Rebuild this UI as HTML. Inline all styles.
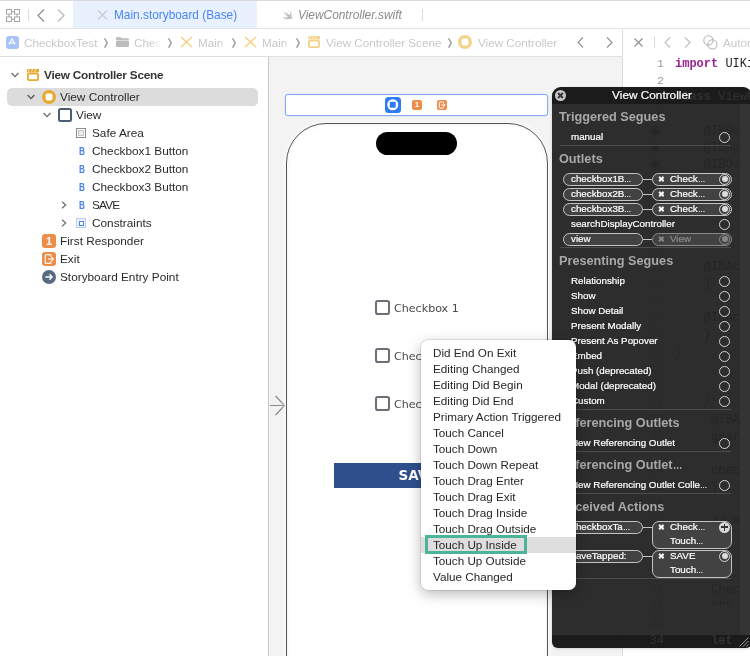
<!DOCTYPE html>
<html><head><meta charset="utf-8"><title>Main.storyboard</title>
<style>
*{box-sizing:border-box;margin:0;padding:0}
html,body{width:750px;height:656px;overflow:hidden;background:#fff}
body{position:relative;font-family:"Liberation Sans",sans-serif;font-size:12px;color:#262626;-webkit-font-smoothing:antialiased}
#root{position:absolute;left:0;top:0;width:750px;height:656px;overflow:hidden;will-change:transform;transform:translateZ(0)}
.abs{position:absolute}
.t{position:absolute;white-space:nowrap;line-height:16px;height:16px}
svg{position:absolute;overflow:visible}
/* top bars */
#tabbar{left:0;top:0;width:750px;height:29px;background:#fff;border-top:1px solid #d9d9d9;border-bottom:1px solid #e4e4e4}
#tab1{left:73px;top:1px;width:184px;height:27px;background:#e9f1fe}
#crumb{left:0;top:29px;width:750px;height:28px;background:#fff;border-bottom:1px solid #e0e0e0}
.bc{color:#c8c8c8;font-size:11.7px}
.sep{color:#8a8a8a;font-size:9px}
/* outline */
#outline{left:0;top:57px;width:268px;height:599px;background:#fff}
#sel{left:7px;top:88px;width:251px;height:18px;background:#dcdcdc;border-radius:5px}
.row{font-size:11.8px;color:#2a2a2a}
.bi{margin-top:.6px;font-size:10px;font-weight:bold;color:#4a80ee;width:8px;margin-left:-.5px;text-align:center;transform:scaleX(.82)}
/* canvas */
#canvas{left:268px;top:57px;width:354px;height:599px;background:#f3f3f3}
#editor{left:622px;top:29px;width:128px;height:627px;background:#fff;border-left:1px solid #dcdcdc}
.mono{font-family:"Liberation Mono",monospace;font-size:12px}
.cb{width:14.500px;height:14.500px;border:2px solid #6e6e78;border-radius:2.800px;background:#fff}
.cbt{margin-top:.8px;font-family:"DejaVu Sans",sans-serif;font-size:11.100px;color:#4a4a4a}
.gl{color:#b8b8b8}
.gc{color:#5a5a5a}
.gh{position:absolute;white-space:nowrap;line-height:16px;color:rgba(255,255,255,.09)}
/* hud */
#hud{left:552px;top:87px;width:200px;height:561px;border-radius:9px 9px 6px 6px;background:rgba(34,34,34,.95);overflow:hidden;box-shadow:0 1px 3px rgba(0,0,0,.15)}
#hudtitle{left:0;top:0;width:210px;height:17px;background:rgba(0,0,0,.4)}
#hudfoot{left:0;top:548px;width:210px;height:13px;background:rgba(0,0,0,.4)}
.hh{position:absolute;left:7.500px;font-weight:bold;font-size:12.700px;color:#a8a8a8;white-space:nowrap;line-height:16px}
.el{display:inline-block;transform:scaleX(.74);transform-origin:0 50%;margin-right:-2.600px}
.hr{position:absolute;left:19px;font-size:9.800px;-webkit-text-stroke:.2px;color:#fff;white-space:nowrap;line-height:14px}
.hl{position:absolute;left:8px;width:171px;height:1px;background:#4c4c4c}
.ring{position:absolute;left:166.900px;width:11.400px;height:11.400px;border:1.500px solid #d2d2d2;border-radius:50%}
.pill{position:absolute;height:13px;border:1px solid #c4c4c4;border-radius:7px;background:rgba(255,255,255,.1)}
/* popup */
#menu{left:421px;top:340px;width:155px;height:250px;background:#fff;border-radius:7px;box-shadow:0 0 0 .5px rgba(0,0,0,.18),0 4px 14px rgba(0,0,0,.28)}
.mi{position:absolute;left:12px;font-size:11.700px;color:#262626;white-space:nowrap;line-height:16px}
</style></head><body><div id="root">

<!-- ===== tab bar ===== -->
<div id="tabbar" class="abs"></div>
<div id="tab1" class="abs"></div>
<svg style="left:6px;top:9px" width="14" height="13" viewBox="0 0 14 13" fill="none" stroke="#a6a6a6" stroke-width="1"><rect x=".5" y=".5" width="5" height="4.6"/><rect x="8.5" y=".5" width="5" height="4.6"/><rect x=".5" y="7.9" width="5" height="4.6"/><rect x="8.5" y="7.9" width="5" height="4.6"/><path d="M5.5 2.8h3M5.5 10.2h3M3 5.1v2.8M11 5.1v2.8"/></svg>
<div class="abs" style="left:28px;top:9px;width:1px;height:12px;background:#dcdcdc"></div>
<svg style="left:37px;top:9px" width="8" height="13" viewBox="0 0 8 13" fill="none" stroke="#8e8e8e" stroke-width="1.2"><path d="M7 .5L1 6.5l6 6"/></svg>
<svg style="left:57px;top:9px" width="8" height="13" viewBox="0 0 8 13" fill="none" stroke="#b9b9b9" stroke-width="1.2"><path d="M1 .5l6 6-6 6"/></svg>
<svg style="left:97px;top:10px" width="11" height="10" viewBox="0 0 11 10" fill="none" stroke="#c9ccd2" stroke-width="1.2"><path d="M1 .5l9 9M10 .5l-9 9"/></svg>
<div class="t" style="left:114px;top:7px;font-size:11.85px;color:#4a86f6">Main.storyboard (Base)</div>
<svg style="left:281.500px;top:10px" width="11" height="10" viewBox="0 0 11 10"><path d="M7 .2C9.200 1.800 10 4.600 9.300 6.600c.9 1.100 1.300 2.300 1.100 3-.6-.9-1.400-1.300-2.200-1C6.600 9.600 3.200 9.800.2 6.400c2.200 1.200 4.400 1.400 5.800.5C4 5.400 2.300 3.300 1 1.500c1.800 1.500 3.600 2.800 5.200 3.800C5 4 3.600 2.300 2.800 1c1.800 1.700 3.800 3.400 5.300 4.300C8.500 3.800 8.200 1.900 7 .2z" fill="#bcbcbc"/></svg>
<div class="t" style="left:298px;top:7px;font-size:11.9px;font-style:italic;color:#8a8a8a">ViewController.swift</div>
<div class="abs" style="left:422px;top:9px;width:1px;height:12px;background:#dcdcdc"></div>

<!-- ===== breadcrumb ===== -->
<div id="crumb" class="abs"></div>
<div class="abs" style="left:5.500px;top:35.500px;width:13px;height:13px;border-radius:3px;background:#a6c3fb"></div>
<svg style="left:6px;top:36px" width="12" height="12" viewBox="0 0 12 12" fill="none" stroke="#fff" stroke-width="1.100"><path d="M6 2.5L3.3 8.5M6 2.5l2.7 6M2.5 7h7"/></svg>
<div class="t bc" style="left:24px;top:35px">CheckboxTest</div>
<svg style="left:103.5px;top:38px" width="4" height="10" viewBox="0 0 4 10" fill="none" stroke="#9a9a9a" stroke-width="1.4"><path d="M.6 .3L3.200 5 .6 9.700"/></svg>
<svg style="left:116px;top:37px" width="13" height="10" viewBox="0 0 13 10"><path d="M0 1.5C0 .7.6 0 1.4 0h3l1.2 1.3h6c.8 0 1.4.6 1.4 1.4V3H0z" fill="#bdbdbd"/><rect x="0" y="3.6" width="13" height="6.4" rx="1.2" fill="#bdbdbd"/></svg>
<div class="t bc" style="left:134px;top:35px;width:27px;overflow:hidden;-webkit-mask-image:linear-gradient(90deg,#000 60%,transparent)">Check</div>
<svg style="left:167.5px;top:38px" width="4" height="10" viewBox="0 0 4 10" fill="none" stroke="#9a9a9a" stroke-width="1.4"><path d="M.6 .3L3.200 5 .6 9.700"/></svg>
<svg style="left:180px;top:36px" width="13" height="12" viewBox="0 0 13 12" fill="none" stroke="#f5cf7c" stroke-width="1.3"><path d="M1 1l11 10M12 1L1 11"/></svg>
<div class="t bc" style="left:198px;top:35px;width:28px;overflow:hidden;-webkit-mask-image:linear-gradient(90deg,#000 80%,transparent)">Main.s</div>
<svg style="left:231.5px;top:38px" width="4" height="10" viewBox="0 0 4 10" fill="none" stroke="#9a9a9a" stroke-width="1.4"><path d="M.6 .3L3.200 5 .6 9.700"/></svg>
<svg style="left:244px;top:36px" width="13" height="12" viewBox="0 0 13 12" fill="none" stroke="#f5cf7c" stroke-width="1.3"><path d="M1 1l11 10M12 1L1 11"/></svg>
<div class="t bc" style="left:262px;top:35px;width:28px;overflow:hidden;-webkit-mask-image:linear-gradient(90deg,#000 80%,transparent)">Main.s</div>
<svg style="left:295.5px;top:38px" width="4" height="10" viewBox="0 0 4 10" fill="none" stroke="#9a9a9a" stroke-width="1.4"><path d="M.6 .3L3.200 5 .6 9.700"/></svg>
<svg style="left:308px;top:36px" width="12" height="12" viewBox="0 0 12 12"><rect x="0" y="0" width="12" height="3.600" rx="1" fill="#f5d28a"/><path d="M2.200 0l-1 3.600M5.400 0l-1 3.600M8.600 0l-1 3.600" stroke="#fff" stroke-width=".9" opacity=".7"/><rect x=".9" y="4.600" width="10.200" height="6.500" rx="1" fill="none" stroke="#f5d28a" stroke-width="1.800"/></svg>
<div class="t bc" style="left:326px;top:35px">View Controller Scene</div>
<svg style="left:447.5px;top:38px" width="4" height="10" viewBox="0 0 4 10" fill="none" stroke="#9a9a9a" stroke-width="1.4"><path d="M.6 .3L3.200 5 .6 9.700"/></svg>
<svg style="left:458px;top:35px" width="14" height="14" viewBox="0 0 14 14"><circle cx="7" cy="7" r="7" fill="#f5d28a"/><rect x="3.6" y="3.6" width="6.8" height="6.8" rx="1.6" fill="#fff"/></svg>
<div class="t bc" style="left:478px;top:35px">View Controller</div>
<svg style="left:577px;top:37px" width="7" height="11" viewBox="0 0 7 11" fill="none" stroke="#8e8e8e" stroke-width="1.1"><path d="M6 .5L1 5.5l5 5"/></svg>
<svg style="left:606px;top:37px" width="7" height="11" viewBox="0 0 7 11" fill="none" stroke="#8e8e8e" stroke-width="1.1"><path d="M1 .5l5 5-5 5"/></svg>

<!-- ===== outline ===== -->
<div id="outline" class="abs"></div>
<div id="sel" class="abs"></div>

<!-- tree rows -->
<svg style="left:10.900px;top:72px" width="8" height="6" viewBox="0 0 8 6" fill="none" stroke="#6b6b6b" stroke-width="1.3"><path d="M.6 1l3.4 3.6L7.4 1"/></svg>
<svg style="left:27px;top:69px" width="12" height="12" viewBox="0 0 12 12"><rect x="0" y="0" width="12" height="3.6" rx="1" fill="#e8a92f"/><path d="M2.2 0l-1 3.6M5.4 0l-1 3.6M8.6 0l-1 3.6" stroke="#fff" stroke-width=".9" opacity=".7"/><rect x=".9" y="4.6" width="10.2" height="6.5" rx="1" fill="#fff" stroke="#e8a92f" stroke-width="1.8"/></svg>
<div class="t row" style="left:44px;top:67px;font-weight:bold;letter-spacing:-.24px;color:#343434">View Controller Scene</div>

<svg style="left:27.200px;top:94px" width="8" height="6" viewBox="0 0 8 6" fill="none" stroke="#555" stroke-width="1.3"><path d="M.6 1l3.4 3.6L7.4 1"/></svg>
<svg style="left:42px;top:90px" width="14" height="14" viewBox="0 0 14 14"><circle cx="7" cy="7" r="7" fill="#e8a92f"/><rect x="3.6" y="3.6" width="6.8" height="6.8" rx="1.6" fill="#fff"/></svg>
<div class="t row" style="left:60px;top:89px">View Controller</div>

<svg style="left:43.200px;top:112px" width="8" height="6" viewBox="0 0 8 6" fill="none" stroke="#6b6b6b" stroke-width="1.3"><path d="M.6 1l3.4 3.6L7.4 1"/></svg>
<div class="abs" style="left:58px;top:108.300px;width:14px;height:14px;border:2.100px solid #4c5d72;border-radius:2.5px;background:#fff"></div>
<div class="t row" style="left:76px;top:107px">View</div>

<div class="abs" style="left:76px;top:128px;width:10px;height:10px;border:1px solid #8c8c8c;background:#fff"></div>
<div class="abs" style="left:78px;top:130px;width:6px;height:6px;border:1px solid #c4c4c4;background:#ececec"></div>
<div class="t row" style="left:92px;top:125px">Safe Area</div>

<div class="t bi" style="left:78px;top:143px">B</div>
<div class="t row" style="left:92px;top:143px">Checkbox1 Button</div>
<div class="t bi" style="left:78px;top:161px">B</div>
<div class="t row" style="left:92px;top:161px">Checkbox2 Button</div>
<div class="t bi" style="left:78px;top:179px">B</div>
<div class="t row" style="left:92px;top:179px">Checkbox3 Button</div>

<svg style="left:61px;top:201px" width="6" height="8" viewBox="0 0 6 8" fill="none" stroke="#6b6b6b" stroke-width="1.3"><path d="M1 .6l3.6 3.4L1 7.4"/></svg>
<div class="t bi" style="left:78px;top:197px">B</div>
<div class="t row" style="left:92px;top:197px;letter-spacing:-.8px">SAVE</div>

<svg style="left:61px;top:219px" width="6" height="8" viewBox="0 0 6 8" fill="none" stroke="#6b6b6b" stroke-width="1.3"><path d="M1 .6l3.6 3.4L1 7.4"/></svg>
<div class="abs" style="left:76px;top:218px;width:10px;height:10px;border:1px solid #b9cdf8;background:#eef3fe"></div>
<div class="abs" style="left:78.5px;top:220.5px;width:5px;height:5px;border:1.2px solid #4a80ee;background:#fff"></div>
<div class="t row" style="left:92px;top:215px">Constraints</div>

<div class="abs" style="left:42px;top:234px;width:14px;height:14px;border-radius:3px;background:#ee8c4a"></div>
<div class="t" style="left:42px;top:233px;width:14px;text-align:center;color:#fff;font-weight:bold;font-size:11px">1</div>
<div class="t row" style="left:60px;top:233px">First Responder</div>

<div class="abs" style="left:42px;top:252px;width:14px;height:14px;border-radius:3px;background:#ee8c4a"></div>
<svg style="left:42px;top:252px" width="14" height="14" viewBox="0 0 14 14" fill="none" stroke="#fff" stroke-width="1.1"><path d="M9 5V3.6c0-.6-.4-1-1-1H4.2c-.6 0-1 .4-1 1v6.8c0 .6.4 1 1 1H8c.6 0 1-.4 1-1V9"/><path d="M6 7h5.4M9.6 5.2L11.4 7 9.6 8.8" stroke-width="1.2"/></svg>
<div class="t row" style="left:60px;top:251px">Exit</div>

<svg style="left:42px;top:270px" width="14" height="14" viewBox="0 0 14 14"><circle cx="7" cy="7" r="7" fill="#576b80"/><path d="M3.4 7h6.6M7.4 4.2L10.2 7 7.4 9.8" fill="none" stroke="#fff" stroke-width="1.3"/></svg>
<div class="t row" style="left:60px;top:269px">Storyboard Entry Point</div>
<div id="canvas" class="abs"></div>
<div id="editor" class="abs"></div>
<!-- ===== canvas contents ===== -->
<div class="abs" style="left:268px;top:57px;width:1.300px;height:599px;background:#c9c9c9"></div>
<svg style="left:270px;top:395px" width="16" height="21" viewBox="0 0 16 21" fill="none" stroke="#8a8a8a" stroke-width="1.2"><path d="M0 10.5h14M5.5 1l9 9.5-9 9.5"/></svg>
<div class="abs" style="left:285px;top:94px;width:263px;height:22px;border:1px solid #86abf4;border-radius:3px;background:#fff;box-shadow:0 0 0 .5px #cfdefb"></div>
<div class="abs" style="left:385px;top:97.300px;width:15.500px;height:15.500px;border-radius:3.5px;background:#2f7bf6"></div>
<svg style="left:385px;top:97.300px" width="15.500" height="15.500" viewBox="0 0 15.500 15.500"><circle cx="7.75" cy="7.75" r="5.5" fill="#fff"/><rect x="4.750" y="4.750" width="6" height="6" rx="1.300" fill="#2f7bf6"/></svg>
<div class="abs" style="left:412px;top:100.300px;width:10px;height:10px;border-radius:2px;background:#ee8c4a"></div>
<div class="t" style="left:412px;top:97.300px;width:10px;text-align:center;color:#fff;font-weight:bold;font-size:8px">1</div>
<div class="abs" style="left:436.500px;top:100.300px;width:10px;height:10px;border-radius:2px;background:#ee8c4a"></div>
<svg style="left:436.500px;top:100.300px" width="10" height="10" viewBox="0 0 14 14" fill="none" stroke="#fff" stroke-width="1.400"><path d="M9 5V3.600c0-.6-.4-1-1-1H4.200c-.6 0-1 .4-1 1v6.800c0 .6.400 1 1 1H8c.6 0 1-.4 1-1V9"/><path d="M6 7h5.400M9.600 5.200L11.400 7 9.600 8.800"/></svg>

<div class="abs" style="left:286px;top:122.500px;width:261.500px;height:572px;border:1px solid #555;border-radius:40px;background:#fff;box-shadow:0 0 4px 1px rgba(255,255,255,.85),inset 0 0 5px rgba(0,0,0,.07)"></div>
<div class="abs" style="left:376px;top:132px;width:81px;height:22.500px;border-radius:12px;background:#000"></div>

<div class="abs cb" style="left:375px;top:300px"></div>
<div class="t cbt" style="left:394px;top:300px">Checkbox 1</div>
<div class="abs cb" style="left:375px;top:348px"></div>
<div class="t cbt" style="left:394px;top:348px">Checkbox 2</div>
<div class="abs cb" style="left:375px;top:396px"></div>
<div class="t cbt" style="left:394px;top:396px">Checkbox 3</div>
<div class="abs" style="left:334px;top:463px;width:168px;height:25px;background:#2f4f8c"></div>
<div class="t" style="left:334px;top:467px;width:168px;text-align:center;color:#fff;font-family:'DejaVu Sans',sans-serif;font-weight:bold;font-size:13.5px">SAVE</div>

<!-- ===== editor ===== -->
<svg style="left:634px;top:38px" width="9" height="9" viewBox="0 0 9 9" fill="none" stroke="#8e8e8e" stroke-width="1.1"><path d="M.5.5l8 8M8.500 .5l-8 8"/></svg>
<div class="abs" style="left:654px;top:36px;width:1px;height:12px;background:#dcdcdc"></div>
<svg style="left:664px;top:37px" width="7" height="11" viewBox="0 0 7 11" fill="none" stroke="#bdbdbd" stroke-width="1.1"><path d="M6 .5L1 5.5l5 5"/></svg>
<svg style="left:684px;top:37px" width="7" height="11" viewBox="0 0 7 11" fill="none" stroke="#bdbdbd" stroke-width="1.1"><path d="M1 .5l5 5-5 5"/></svg>
<svg style="left:703px;top:35px" width="15" height="15" viewBox="0 0 15 15" fill="none" stroke="#b4b4b4" stroke-width="1.1"><circle cx="5.4" cy="5.4" r="4.6"/><circle cx="9.4" cy="9.4" r="4.6"/></svg>
<div class="t bc" style="left:723px;top:35px">Autom</div>
<div class="t mono" style="left:650px;top:55.700px;width:14px;text-align:right;color:#9a9a9a;font-size:11.500px">1</div>
<div class="t mono" style="left:650px;top:72.700px;width:14px;text-align:right;color:#9a9a9a;font-size:11.500px">2</div>
<div class="t mono" style="left:675px;top:55.700px;color:#1f1f1f"><b style="color:#9b2393">import</b> UIKit</div>


<!-- editor code (behind panel) -->
<div class="abs" style="left:0;top:104px;width:739.500px;height:531px;overflow:hidden"><div class="abs" style="left:0;top:-104px;width:750px;height:656px">
<div class="t mono gl" style="left:643px;top:89px;width:21px;text-align:right">3</div>
<div class="t mono gl" style="left:643px;top:106px;width:21px;text-align:right">4</div>
<div class="t mono gl" style="left:643px;top:174px;width:21px;text-align:right">8</div>
<div class="t mono gl" style="left:643px;top:191px;width:21px;text-align:right">9</div>
<div class="t mono gl" style="left:643px;top:208px;width:21px;text-align:right">10</div>
<div class="t mono gl" style="left:643px;top:225px;width:21px;text-align:right">11</div>
<div class="t mono gl" style="left:643px;top:242px;width:21px;text-align:right">12</div>
<div class="t mono gl" style="left:643px;top:259px;width:21px;text-align:right">13</div>
<div class="t mono gl" style="left:643px;top:276px;width:21px;text-align:right">14</div>
<div class="t mono gl" style="left:643px;top:293px;width:21px;text-align:right">15</div>
<div class="t mono gl" style="left:643px;top:310px;width:21px;text-align:right">16</div>
<div class="t mono gl" style="left:643px;top:327px;width:21px;text-align:right">17</div>
<div class="t mono gl" style="left:643px;top:344px;width:21px;text-align:right">18</div>
<div class="t mono gl" style="left:643px;top:361px;width:21px;text-align:right">19</div>
<div class="t mono gl" style="left:643px;top:378px;width:21px;text-align:right">20</div>
<div class="t mono gl" style="left:643px;top:395px;width:21px;text-align:right">21</div>
<div class="t mono gc" style="left:675px;top:89px"><b>class</b> ViewCo</div>
<div class="abs" style="left:650px;top:126px;width:10px;height:10px;border-radius:50%;border:1px solid #666;background:radial-gradient(#555 45%,transparent 50%)"></div>
<div class="t mono gc" style="left:703.8px;top:123px">@IBOut</div>
<div class="abs" style="left:650px;top:143px;width:10px;height:10px;border-radius:50%;border:1px solid #666;background:radial-gradient(#555 45%,transparent 50%)"></div>
<div class="t mono gc" style="left:703.8px;top:140px">@IBOut</div>
<div class="abs" style="left:650px;top:160px;width:10px;height:10px;border-radius:50%;border:1px solid #666;background:radial-gradient(#555 45%,transparent 50%)"></div>
<div class="t mono gc" style="left:703.8px;top:157px">@IBOut</div>
<div class="t mono gc" style="left:703.8px;top:259px">@IBAct</div>
<div class="t mono gc" style="left:703.8px;top:276px">}</div>
<div class="t mono gc" style="left:703.8px;top:310px">@IBAct</div>
<div class="t mono gc" style="left:703.8px;top:327px">}</div>
<div class="t mono gc" style="left:675px;top:344px">}</div>
<div class="t mono gc" style="left:703.8px;top:395px">/*</div>
<div class="t mono gl" style="left:643px;top:412px;width:21px;text-align:right">22</div>
<div class="t mono gl" style="left:643px;top:429px;width:21px;text-align:right">23</div>
<div class="t mono gl" style="left:643px;top:463px;width:21px;text-align:right">24</div>
<div class="t mono gl" style="left:643px;top:480px;width:21px;text-align:right">25</div>
<div class="t mono gl" style="left:643px;top:497px;width:21px;text-align:right">26</div>
<div class="t mono gl" style="left:643px;top:514px;width:21px;text-align:right">27</div>
<div class="t mono gl" style="left:643px;top:531px;width:21px;text-align:right">28</div>
<div class="t mono gl" style="left:643px;top:548px;width:21px;text-align:right">29</div>
<div class="t mono gl" style="left:643px;top:565px;width:21px;text-align:right">30</div>
<div class="t mono gc" style="left:711px;top:412px">@IBA</div>
<div class="t mono gc" style="left:711px;top:429px">guar</div>
<div class="t mono gc" style="left:711px;top:463px">chec</div>
<div class="t mono gc" style="left:711px;top:480px">}</div>
<div class="t mono gc" style="left:711px;top:514px">// M</div>
<div class="t mono gl" style="left:643px;top:581.5px;width:21px;text-align:right">31</div>
<div class="t mono gl" style="left:643px;top:598.5px;width:21px;text-align:right">32</div>
<div class="t mono gl" style="left:643px;top:615.5px;width:21px;text-align:right">33</div>
<div class="t mono gl" style="left:643px;top:632.5px;width:21px;text-align:right">34</div>
<div class="t mono gc" style="left:711px;top:581.5px">Chec</div>
<div class="t mono gc" style="left:711px;top:598.5px">&quot;&quot;&quot;</div>
</div></div>

<!-- ===== HUD connections panel ===== -->
<div id="hud" class="abs">
<div class="abs" style="left:187.500px;top:17px;width:22px;height:531px;background:rgba(255,255,255,.035)"></div>
<div id="hudtitle" class="abs"></div>
<div class="gh mono" style="left:123px;top:2px"><b>class</b> ViewCon</div>
<div class="abs" style="left:3px;top:3px;width:11px;height:11px;border-radius:50%;background:#c8c8c8"></div>
<svg style="left:3px;top:3px" width="11" height="11" viewBox="0 0 11 11" fill="none" stroke="#3a3a3a" stroke-width="2.100"><path d="M3.100 3.100l4.800 4.800M7.900 3.100l-4.800 4.800"/></svg>
<div class="hr" style="left:0;top:.2px;width:200px;text-align:center;font-size:11.800px;line-height:16px">View Controller</div>
<div class="hh" style="left:7px;top:22px">Triggered Segues</div>
<div class="hr" style="left:19px;top:43px">manual</div><div class="ring" style="top:44.5px"></div>
<div class="hl" style="top:58px"></div>
<div class="hh" style="left:7px;top:64px">Outlets</div>
<div class="pill" style="left:11px;top:85.5px;width:80px"></div><div class="abs" style="left:91px;top:91.5px;width:9px;height:1px;background:#c4c4c4"></div><div class="hr" style="left:19px;top:85px">checkbox1B<span class="el">&hellip;</span></div><div class="pill" style="left:100px;top:85.5px;width:80px;height:13px;border-color:#c4c4c4"></div><div class="hr" style="left:105.500px;top:85px;color:#fff;font-size:8px;margin-top:.8px">&#x2716;</div><div class="hr" style="left:118px;top:85px;color:#fff">Check<span class="el">&hellip;</span></div><div class="ring" style="top:86.5px"></div><div class="abs" style="left:169.5px;top:89px;width:6px;height:6px;border-radius:50%;background:#dcdcdc"></div>
<div class="pill" style="left:11px;top:100.5px;width:80px"></div><div class="abs" style="left:91px;top:106.5px;width:9px;height:1px;background:#c4c4c4"></div><div class="hr" style="left:19px;top:100px">checkbox2B<span class="el">&hellip;</span></div><div class="pill" style="left:100px;top:100.5px;width:80px;height:13px;border-color:#c4c4c4"></div><div class="hr" style="left:105.500px;top:100px;color:#fff;font-size:8px;margin-top:.8px">&#x2716;</div><div class="hr" style="left:118px;top:100px;color:#fff">Check<span class="el">&hellip;</span></div><div class="ring" style="top:101.5px"></div><div class="abs" style="left:169.5px;top:104px;width:6px;height:6px;border-radius:50%;background:#dcdcdc"></div>
<div class="pill" style="left:11px;top:115.5px;width:80px"></div><div class="abs" style="left:91px;top:121.5px;width:9px;height:1px;background:#c4c4c4"></div><div class="hr" style="left:19px;top:115px">checkbox3B<span class="el">&hellip;</span></div><div class="pill" style="left:100px;top:115.5px;width:80px;height:13px;border-color:#c4c4c4"></div><div class="hr" style="left:105.500px;top:115px;color:#fff;font-size:8px;margin-top:.8px">&#x2716;</div><div class="hr" style="left:118px;top:115px;color:#fff">Check<span class="el">&hellip;</span></div><div class="ring" style="top:116.5px"></div><div class="abs" style="left:169.5px;top:119px;width:6px;height:6px;border-radius:50%;background:#dcdcdc"></div>
<div class="hr" style="left:19px;top:130px">searchDisplayController</div><div class="ring" style="top:131.5px"></div>
<div class="pill" style="left:11px;top:145.5px;width:80px"></div><div class="abs" style="left:91px;top:151.5px;width:9px;height:1px;background:#c4c4c4"></div><div class="hr" style="left:19px;top:145px">view</div><div class="pill" style="left:100px;top:145.5px;width:80px;height:13px;border-color:#8a8a8a"></div><div class="hr" style="left:105.500px;top:145px;color:#8c8c8c;font-size:8px;margin-top:.8px">&#x2716;</div><div class="hr" style="left:118px;top:145px;color:#8c8c8c">View</div><div class="ring" style="top:146.5px;opacity:.45"></div><div class="abs" style="left:169.5px;top:149px;width:6px;height:6px;border-radius:50%;background:#dcdcdc;opacity:.45"></div>
<div class="hl" style="top:160px"></div>
<div class="hh" style="left:7px;top:166px">Presenting Segues</div>
<div class="hr" style="left:19px;top:187px">Relationship</div><div class="ring" style="top:188.5px"></div>
<div class="hr" style="left:19px;top:202px">Show</div><div class="ring" style="top:203.5px"></div>
<div class="hr" style="left:19px;top:217px">Show Detail</div><div class="ring" style="top:218.5px"></div>
<div class="hr" style="left:19px;top:232px">Present Modally</div><div class="ring" style="top:233.5px"></div>
<div class="hr" style="left:19px;top:247px">Present As Popover</div><div class="ring" style="top:248.5px"></div>
<div class="hr" style="left:19px;top:262px">Embed</div><div class="ring" style="top:263.5px"></div>
<div class="hr" style="left:19px;top:277px">Push (deprecated)</div><div class="ring" style="top:278.5px"></div>
<div class="hr" style="left:19px;top:292px">Modal (deprecated)</div><div class="ring" style="top:293.5px"></div>
<div class="hr" style="left:19px;top:307px">Custom</div><div class="ring" style="top:308.5px"></div>
<div class="hl" style="top:322px"></div>
<div class="hh" style="left:7px;top:328px">Referencing Outlets</div>
<div class="hr" style="left:19px;top:349px">New Referencing Outlet</div><div class="ring" style="top:350.5px"></div>
<div class="hl" style="top:364px"></div>
<div class="hh" style="left:7px;top:370px">Referencing Outlet<span class="el">&hellip;</span></div>
<div class="hr" style="left:19px;top:391px">New Referencing Outlet Colle<span class="el">&hellip;</span></div><div class="ring" style="top:392.5px"></div>
<div class="hl" style="top:406px"></div>
<div class="hh" style="left:7px;top:412px">Received Actions</div>
<div class="pill" style="left:11px;top:433.5px;width:80px"></div><div class="abs" style="left:91px;top:439.5px;width:9px;height:1px;background:#c4c4c4"></div><div class="hr" style="left:19px;top:433px">checkboxTa<span class="el">&hellip;</span></div><div class="pill" style="left:100px;top:433.5px;width:80px;height:28px;border-color:#c4c4c4"></div><div class="hr" style="left:105.500px;top:433px;color:#fff;font-size:8px;margin-top:.8px">&#x2716;</div><div class="hr" style="left:118px;top:433px;color:#fff">Check<span class="el">&hellip;</span></div><div class="hr" style="left:118px;top:446.700px;color:#fff">Touch<span class="el">&hellip;</span></div><div class="abs" style="left:167px;top:434.5px;width:11px;height:11px;border-radius:50%;background:#d6d6d6"></div><div class="abs" style="left:169px;top:439.25px;width:7px;height:1.5px;background:#333"></div><div class="abs" style="left:171.75px;top:436.5px;width:1.5px;height:7px;background:#333"></div>
<div class="pill" style="left:11px;top:462.5px;width:80px"></div><div class="abs" style="left:91px;top:468.5px;width:9px;height:1px;background:#c4c4c4"></div><div class="hr" style="left:19px;top:462px">saveTapped:</div><div class="pill" style="left:100px;top:462.5px;width:80px;height:28px;border-color:#c4c4c4"></div><div class="hr" style="left:105.500px;top:462px;color:#fff;font-size:8px;margin-top:.8px">&#x2716;</div><div class="hr" style="left:118px;top:462px;color:#fff">SAVE</div><div class="hr" style="left:118px;top:475.700px;color:#fff">Touch<span class="el">&hellip;</span></div><div class="ring" style="top:463.5px"></div><div class="abs" style="left:169.5px;top:466px;width:6px;height:6px;border-radius:50%;background:#dcdcdc"></div>
<div class="hl" style="top:491.29999999999995px"></div>
<div id="hudfoot" class="abs"></div>
<div class="gh mono" style="left:91px;top:545.500px;width:21px;text-align:right">34</div><div class="gh mono" style="left:159px;top:545.500px"><b>let</b></div>
<svg style="left:187px;top:550px" width="10" height="10" viewBox="0 0 10 10" stroke="#9a9a9a" stroke-width="1"><path d="M9.500 .5l-9 9M9.500 4l-5.500 5.500M9.500 7.500l-2 2"/></svg>
</div>

<!-- ===== popup menu ===== -->
<div id="menu" class="abs">
<div class="abs" style="left:0;top:197px;width:155px;height:16px;background:#dedede"></div>
<div class="mi" style="top:5px">Did End On Exit</div>
<div class="mi" style="top:21px">Editing Changed</div>
<div class="mi" style="top:37px">Editing Did Begin</div>
<div class="mi" style="top:53px">Editing Did End</div>
<div class="mi" style="top:69px">Primary Action Triggered</div>
<div class="mi" style="top:85px">Touch Cancel</div>
<div class="mi" style="top:101px">Touch Down</div>
<div class="mi" style="top:117px">Touch Down Repeat</div>
<div class="mi" style="top:133px">Touch Drag Enter</div>
<div class="mi" style="top:149px">Touch Drag Exit</div>
<div class="mi" style="top:165px">Touch Drag Inside</div>
<div class="mi" style="top:181px">Touch Drag Outside</div>
<div class="mi" style="top:197px">Touch Up Inside</div>
<div class="mi" style="top:213px">Touch Up Outside</div>
<div class="mi" style="top:229px">Value Changed</div>
<div class="abs" style="left:4.200px;top:194.800px;width:102.300px;height:19px;border:3px solid #4db49c"></div>
</div>

</div></body></html>
